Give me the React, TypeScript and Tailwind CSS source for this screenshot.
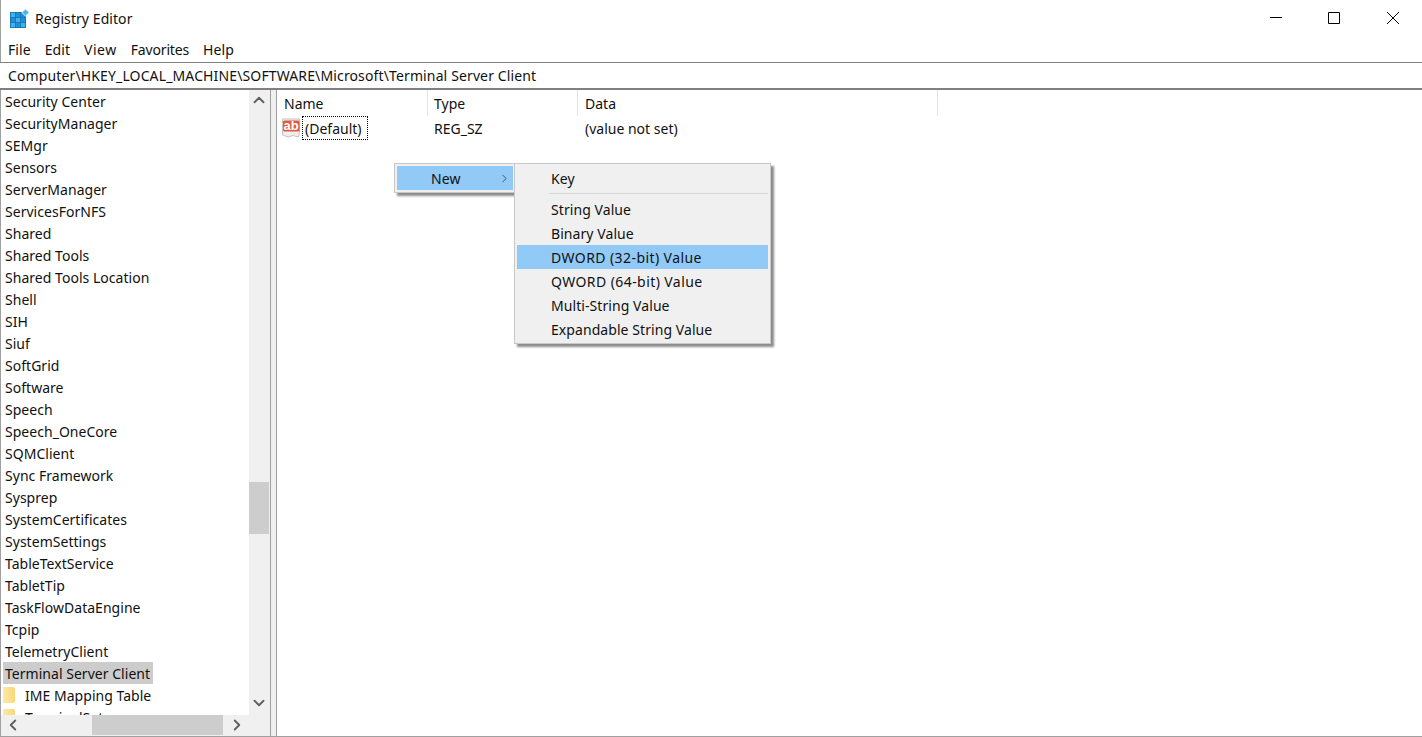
import { ChevronUp, ChevronDown, ChevronLeft, ChevronRight } from "lucide-react";

const keys = [
  "Security Center", "SecurityManager", "SEMgr", "Sensors", "ServerManager", "ServicesForNFS", "Shared",
  "Shared Tools", "Shared Tools Location", "Shell", "SIH", "Siuf", "SoftGrid", "Software", "Speech",
  "Speech_OneCore", "SQMClient", "Sync Framework", "Sysprep", "SystemCertificates", "SystemSettings",
  "TableTextService", "TabletTip", "TaskFlowDataEngine", "Tcpip", "TelemetryClient",
];

const menuItems = ["String Value", "Binary Value", "DWORD (32-bit) Value", "QWORD (64-bit) Value", "Multi-String Value", "Expandable String Value"];

const font = "font-['Noto_Sans','Open_Sans',sans-serif] text-[14px] tracking-[0.07px] text-[#111]";

const AppIcon = () => (
  <svg width="20" height="20" viewBox="0 0 20 20" className="shrink-0">
    <path d="M0 3h16v16H0z" fill="#1f8fd8" />
    <path d="M0.500 3.500h5v5h-5zM5.500 8.500h5v5h-5zM0.500 13.500h5v5h-5zM10.500 13.500h5v5h-5z" fill="#3fb2ec" />
    <path d="M0.500 3.500h15v15h-15zM0.500 8.500h15M0.500 13.500h15M5.500 3.500v15M10.500 3.500v15" stroke="#0f6db0" strokeWidth="0.7" fill="none" />
    <path d="M15.500 0l3.800 3.500-3.800 3.500-3.800-3.500z" fill="#49b6ec" stroke="#fff" strokeWidth="0.8" />
  </svg>
);

const StringIcon = () => (
  <svg width="19" height="21" viewBox="0 0 19 21" className="shrink-0">
    <path d="M0.500 1h17v13l-1 5-6-1.500-4 1.500-6-2z" fill="#f1efec" stroke="#c5c2be" strokeWidth="1" />
    <rect x="1" y="2.500" width="16.500" height="11" rx="1.500" fill="#df5a40" />
    <text x="9.200" y="12" textAnchor="middle" fill="#fff" fontSize="13" fontWeight="700" fontFamily="Liberation Sans, sans-serif">ab</text>
  </svg>
);

const Folder = () => (
  <div className="w-[12px] h-[16px] shrink-0 rounded-r-[2px] bg-gradient-to-r from-[#fdeaa8] to-[#f8d775]" />
);

const VScroll = () => (
  <div className="w-[20px] mr-[1px] bg-[#f0f0f0] flex flex-col items-center relative">
    <ChevronUp size={18} strokeWidth={2.5} className="text-[#606060] mt-[1px]" />
    <div className="absolute top-[392px] left-0 w-full h-[52px] bg-[#cdcdcd]" />
    <ChevronDown size={18} strokeWidth={2.5} className="text-[#606060] mt-auto mb-[3px]" />
  </div>
);

const Tree = () => (
  <div className="w-[271px] flex flex-col border-x border-[#a0a0a0] relative tracking-[0.03px]">
    <div className="flex-1 min-h-0 flex">
      <div className="flex-1 overflow-hidden bg-white pl-[2px]">
        {keys.map((k) => (
          <div key={k} className="h-[22px] flex items-center pl-[2px]">{k}</div>
        ))}
        <div className="h-[22px] w-[150px] bg-[#cccccc] flex items-center pl-[2px]">Terminal Server Client</div>
        <div className="h-[22px] flex items-center gap-[10px] -ml-[2px] pl-[2px]"><Folder />IME Mapping Table</div>
        <div className="h-[22px] flex items-center gap-[10px] -ml-[2px] pl-[2px]"><Folder />TerminalSetup</div>
      </div>
      <VScroll />
    </div>
    <div className="h-[20px] mb-[1px] bg-[#f0f0f0] flex items-center relative shrink-0">
      <ChevronLeft size={18} strokeWidth={2.5} className="text-[#606060] ml-[3px]" />
      <div className="absolute left-[91px] top-0 h-full w-[131px] bg-[#cdcdcd]" />
      <ChevronRight size={18} strokeWidth={2.5} className="text-[#606060] absolute left-[227px]" />
    </div>
  </div>
);

const ListPane = () => (
  <div className="flex-1 min-w-0 border-l border-[#a0a0a0] bg-white relative ml-[5px] tracking-[0px]">
    <div className="flex h-[26px]">
      <div className="w-[151px] border-r border-[#e5e5e5] pl-[7px] pt-[3px]">Name</div>
      <div className="w-[150px] border-r border-[#e5e5e5] pl-[6px] pt-[3px]">Type</div>
      <div className="w-[360px] border-r border-[#e5e5e5] pl-[7px] pt-[3px]">Data</div>
    </div>
    <div className="flex h-[24px] items-center">
      <div className="w-[151px] flex items-center pl-[5px]">
        <StringIcon />
        <span className="border border-dotted border-black px-[2px] h-[24px] w-[66px] leading-[23px] ml-[1px]">(Default)</span>
      </div>
      <div className="w-[150px] pl-[6px]">REG_SZ</div>
      <div className="pl-[7px]">(value not set)</div>
    </div>
  </div>
);

const ContextMenu = () => (
  <>
    <div className="absolute left-[394px] top-[163px] w-[122px] h-[30px] bg-[#f0f0f0] border border-[#c8c8c8] shadow-[3px_3px_2px_rgba(0,0,0,0.45)] p-[2px]">
      <div className="h-[24px] w-full bg-[#91c9f7] flex items-center pl-[34px] relative">
        New
        <ChevronRight size={13} strokeWidth={1.6} className="absolute right-[2px] text-[#444]" />
      </div>
    </div>
    <div className="absolute left-[514px] top-[163px] w-[257px] h-[181px] bg-[#f0f0f0] border border-[#c8c8c8] shadow-[3px_3px_2px_rgba(0,0,0,0.45)] p-[2px]">
      <div className="h-[24px] flex items-center pl-[34px]">Key</div>
      <div className="h-[1px] bg-[#d7d7d7] ml-[32px] mt-[3px] mb-[3px]" />
      {menuItems.map((m, i) => (
        <div key={m} className={`h-[24px] flex items-center pl-[34px] ${i === 2 ? "bg-[#91c9f7]" : ""} ${i === 2 || i === 3 ? "tracking-[0.42px]" : ""}`}>{m}</div>
      ))}
    </div>
  </>
);

export default function App() {
  return (
    <div className={`${font} w-[1422px] h-[737px] bg-white flex flex-col relative overflow-hidden`}>
      <div className="h-[37px] shrink-0 flex items-center pl-[9px] border-l border-[#a0a0a0]">
        <AppIcon />
        <span className="ml-[5px] mt-[-1px]">Registry Editor</span>
        <div className="ml-auto flex items-center mt-[-1px]">
          <svg width="130" height="16" viewBox="0 0 130 16" className="mr-[22px] text-black">
            <path d="M0 7.500h12" stroke="currentColor" fill="none" />
            <path d="M58.500 2.500h11v11h-11z" stroke="currentColor" fill="none" />
            <path d="M117 2l12 12M129 2l-12 12" stroke="currentColor" fill="none" />
          </svg>
        </div>
      </div>
      <div className="h-[25px] shrink-0 flex items-center gap-[14px] pl-[7px] border-l border-[#a0a0a0] bg-white">
        <span>File</span><span>Edit</span><span className="tracking-[0.5px]">View</span><span className="tracking-[-0.15px]">Favorites</span><span>Help</span>
      </div>
      <div className="h-[28px] shrink-0 border-t border-b-2 border-[#808080] flex items-center pl-[8px] bg-white tracking-[0.13px] pb-[1px]">
        Computer\HKEY_LOCAL_MACHINE\SOFTWARE\Microsoft\Terminal Server Client
      </div>
      <div className="flex-1 min-h-0 flex bg-[#f0f0f0] border-b border-[#a0a0a0]">
        <Tree />
        <ListPane />
      </div>
      <ContextMenu />
    </div>
  );
}
